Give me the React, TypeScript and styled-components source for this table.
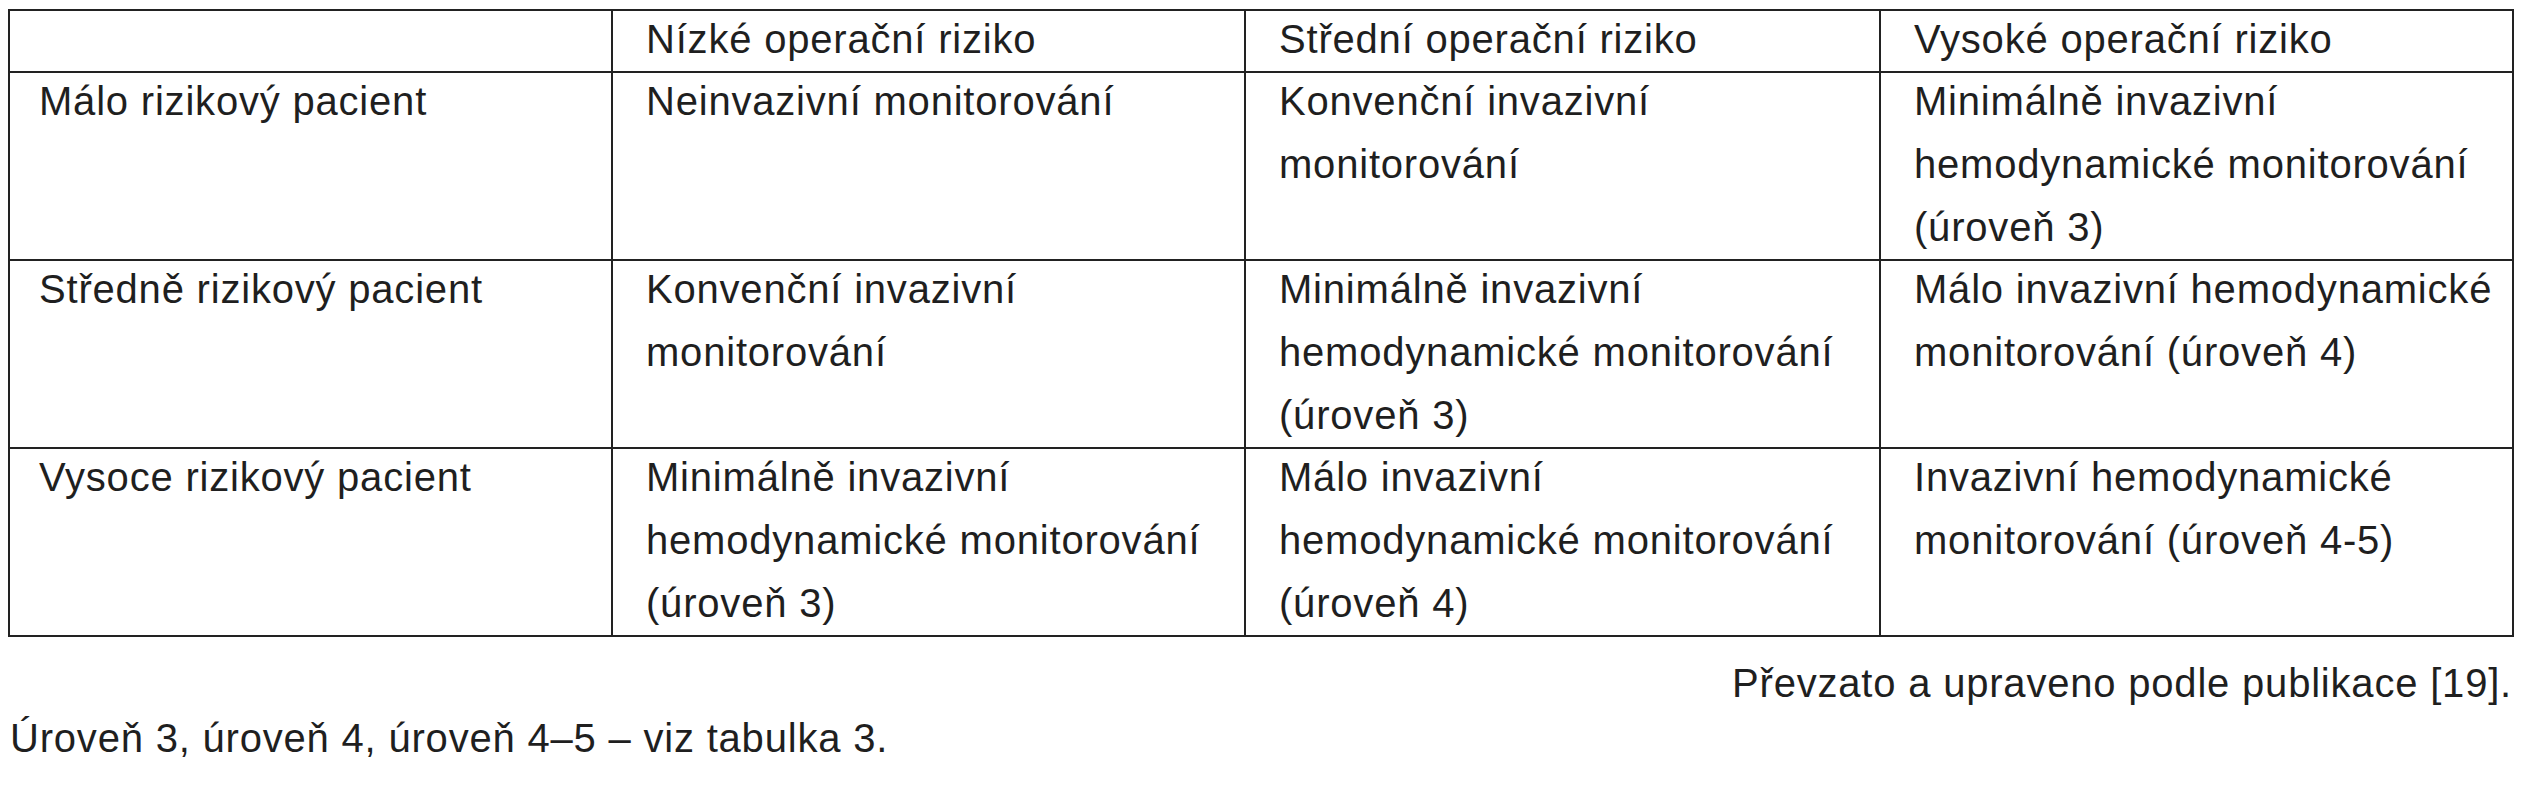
import React from "react";
import styled, { createGlobalStyle } from "styled-components";

const GlobalStyle = createGlobalStyle`
  html, body {
    margin: 0;
    padding: 0;
    background: #ffffff;
  }
  body {
    font-family: "Liberation Sans", Arial, sans-serif;
    color: #1f1f1f;
  }
`;

const Page = styled.div`
  width: 2504px;
  padding: 9px 0 0 8px;
`;

const Table = styled.table`
  width: 2504px;
  border-collapse: collapse;
  table-layout: fixed;
  font-size: 40px;
  letter-spacing: 0.8px;
`;

const Row = styled.tr<{ $head?: boolean }>`
  height: ${(p) => (p.$head ? "60px" : "187px")};
`;

const Cell = styled.td<{ $first?: boolean }>`
  border: 2px solid #222;
  vertical-align: top;
  padding: 0 8px 0 ${(p) => (p.$first ? "29px" : "33px")};
  line-height: 63px;
`;

const CellText = styled.div`
  margin-top: -3px;
  white-space: nowrap;
`;

const Source = styled.div`
  margin-top: 19px;
  text-align: right;
  font-size: 40px;
  letter-spacing: 0.8px;
  line-height: 55px;
`;

const Note = styled.div`
  font-size: 40px;
  letter-spacing: 0.8px;
  line-height: 55px;
  margin-left: 2px;
`;

const widths = [603, 633, 635, 633];

const header = [
  "",
  "Nízké operační riziko",
  "Střední operační riziko",
  "Vysoké operační riziko",
];

const rows: string[][] = [
  [
    "Málo rizikový pacient",
    "Neinvazivní monitorování",
    "Konvenční invazivní\nmonitorování",
    "Minimálně invazivní\nhemodynamické monitorování\n(úroveň 3)",
  ],
  [
    "Středně rizikový pacient",
    "Konvenční invazivní\nmonitorování",
    "Minimálně invazivní\nhemodynamické monitorování\n(úroveň 3)",
    "Málo invazivní hemodynamické\nmonitorování (úroveň 4)",
  ],
  [
    "Vysoce rizikový pacient",
    "Minimálně invazivní\nhemodynamické monitorování\n(úroveň 3)",
    "Málo invazivní\nhemodynamické monitorování\n(úroveň 4)",
    "Invazivní hemodynamické\nmonitorování (úroveň 4-5)",
  ],
];

function Lines({ text }: { text: string }) {
  const parts = text.split("\n");
  return (
    <CellText>
      {parts.map((line, i) => (
        <React.Fragment key={i}>
          {line}
          {i < parts.length - 1 && <br />}
        </React.Fragment>
      ))}
    </CellText>
  );
}

export default function App() {
  return (
    <>
      <GlobalStyle />
      <Page>
        <Table>
          <colgroup>
            {widths.map((w, i) => (
              <col key={i} style={{ width: w }} />
            ))}
          </colgroup>
          <tbody>
            <Row $head>
              {header.map((h, i) => (
                <Cell key={i} $first={i === 0}>
                  <Lines text={h} />
                </Cell>
              ))}
            </Row>
            {rows.map((r, ri) => (
              <Row key={ri}>
                {r.map((c, ci) => (
                  <Cell key={ci} $first={ci === 0}>
                    <Lines text={c} />
                  </Cell>
                ))}
              </Row>
            ))}
          </tbody>
        </Table>
        <Source>Převzato a upraveno podle publikace [19].</Source>
        <Note>Úroveň 3, úroveň 4, úroveň 4–5 – viz tabulka 3.</Note>
      </Page>
    </>
  );
}
